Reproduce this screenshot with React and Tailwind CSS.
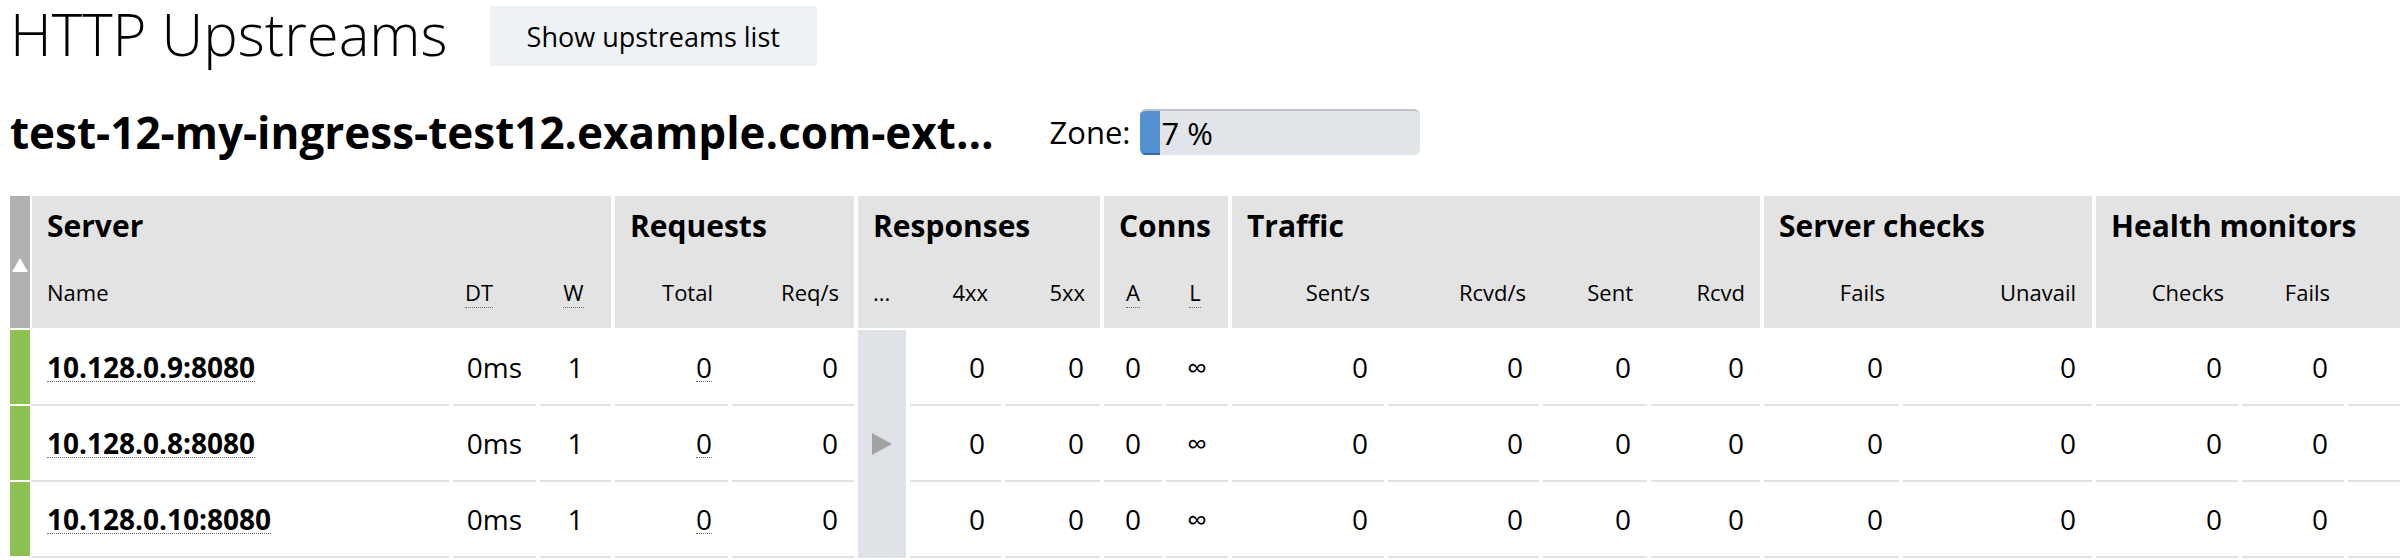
import React from 'react';

// column template shared by the header grid and the body grid
const GRID =
  'grid grid-cols-[20px_419px_87px_75px_117px_126px_52px_95px_99px_62px_66px_156px_155px_108px_113px_139px_193px_146px_106px_160px]';

const groups = [
  { title: 'Server', span: 'col-span-3', gap: 'ml-[2px]' },
  { title: 'Requests', span: 'col-span-2', gap: 'ml-[4px]' },
  { title: 'Responses', span: 'col-span-3', gap: 'ml-[4px]' },
  { title: 'Conns', span: 'col-span-2', gap: 'ml-[4px]' },
  { title: 'Traffic', span: 'col-span-4', gap: 'ml-[4px]' },
  { title: 'Server checks', span: 'col-span-2', gap: 'ml-[4px]' },
  { title: 'Health monitors', span: 'col-span-3', gap: 'ml-[4px]' },
];

const subCols = [
  { label: 'Name', gap: 'ml-[2px]', align: 'text-left pl-[15px]' },
  { label: 'DT', hint: true, align: 'text-left pl-[16px]' },
  { label: 'W', hint: true, align: 'text-center' },
  { label: 'Total', gap: 'ml-[4px]', align: 'text-right pr-[15px]' },
  { label: 'Req/s', align: 'text-right pr-[15px]' },
  { label: '...', gap: 'ml-[4px]', align: 'text-left pl-[15px]' },
  { label: '4xx', align: 'text-right pr-[13px]' },
  { label: '5xx', align: 'text-right pr-[15px]' },
  { label: 'A', hint: true, gap: 'ml-[4px]', align: 'text-center' },
  { label: 'L', hint: true, align: 'text-center' },
  { label: 'Sent/s', gap: 'ml-[4px]', align: 'text-right pr-[14px]' },
  { label: 'Rcvd/s', align: 'text-right pr-[13px]' },
  { label: 'Sent', align: 'text-right pr-[14px]' },
  { label: 'Rcvd', align: 'text-right pr-[15px]' },
  { label: 'Fails', gap: 'ml-[4px]', align: 'text-right pr-[14px]' },
  { label: 'Unavail', align: 'text-right pr-[16px]' },
  { label: 'Checks', gap: 'ml-[4px]', align: 'text-right pr-[14px]' },
  { label: 'Fails', align: 'text-right pr-[14px]' },
  { label: 'Last', align: 'text-right pr-[14px]' },
];

const servers = ['10.128.0.9:8080', '10.128.0.8:8080', '10.128.0.10:8080'];

const Hint = ({ children }) => (
  <span className="border-b border-dotted border-[#6f6f6f]">{children}</span>
);

const Cell = ({ children, center }) => (
  <div
    className={`ml-[4px] h-[76px] border-b-2 border-[#e3e3e3] flex items-center text-[28px] leading-[28px] ${
      center ? 'justify-center' : 'justify-end pr-[16px]'
    }`}
  >
    {children}
  </div>
);

const ServerRow = ({ name, first }) => (
  <>
    <div className="h-[76px] bg-[#8cc152] border-b-2 border-white" />
    <div className="ml-[2px] h-[76px] border-b-2 border-[#e3e3e3] flex items-center pl-[15px] text-[28px] leading-[28px] font-bold">
      <Hint>{name}</Hint>
    </div>
    <Cell center>0ms</Cell>
    <Cell center>1</Cell>
    <Cell>
      <Hint>0</Hint>
    </Cell>
    <Cell>0</Cell>
    {first && (
      <div className="ml-[4px] row-span-3 bg-[#dfe2e6] flex items-center justify-center">
        <svg width="20" height="22" viewBox="0 0 20 22">
          <polygon points="0,0 20,11 0,22" fill="#a3a3a3" />
        </svg>
      </div>
    )}
    <Cell>0</Cell>
    <Cell>0</Cell>
    <Cell center>0</Cell>
    <Cell center>∞</Cell>
    <Cell>0</Cell>
    <Cell>0</Cell>
    <Cell>0</Cell>
    <Cell>0</Cell>
    <Cell>0</Cell>
    <Cell>0</Cell>
    <Cell>0</Cell>
    <Cell>0</Cell>
    <Cell>0</Cell>
  </>
);

const App = () => {
  return (
    <div className="w-[2400px] h-[560px] overflow-hidden bg-white text-black font-['Open_Sans',sans-serif] px-[10px]">
      {/* page title */}
      <div className="flex items-start gap-[42px]">
        <h1 className="text-[58px] leading-[68px] font-light">HTTP Upstreams</h1>
        <button className="mt-[6px] h-[60px] px-[37px] bg-[#eff2f5] text-[27px] leading-[27px]">
          Show upstreams list
        </button>
      </div>

      {/* upstream name + zone usage */}
      <div className="mt-[32px] h-[64px] flex items-center">
        <h2 className="text-[44px] leading-[44px] font-bold">test-12-my-ingress-test12.example.com-ext…</h2>
        <div className="ml-[56px] flex items-center gap-[10px]">
          <span className="text-[31px] leading-[31px]">Zone:</span>
          <div className="relative w-[280px] h-[46px] rounded-[6px] overflow-hidden bg-[#e1e4e8] border-t-2 border-[#c0c4c8] flex items-center">
            <div className="absolute left-0 top-0 bottom-0 w-[20px] bg-[#5591d1] border-b-2 border-[#2d6aad]" />
            <span className="relative pl-[21px] text-[31px] leading-[31px]">7 %</span>
          </div>
        </div>
      </div>

      {/* upstream servers table */}
      <div className="mt-[32px]">
        <div className={GRID}>
          <div className="row-span-2 bg-[#b0b1b3] flex items-center justify-center pt-[6px]">
            <svg width="16" height="14" viewBox="0 0 16 14">
              <polygon points="8,0 16,14 0,14" fill="#ffffff" />
            </svg>
          </div>
          {groups.map((g) => (
            <div
              key={g.title}
              className={`${g.span} ${g.gap} h-[68px] pt-[15px] pl-[15px] bg-[#e3e3e3] text-[30px] leading-[30px] font-bold whitespace-nowrap`}
            >
              {g.title}
            </div>
          ))}
          {subCols.map((c, i) => (
            <div
              key={i}
              className={`${c.gap || ''} ${c.align} h-[64px] pt-[17px] bg-[#e3e3e3] text-[22px] leading-[22px] whitespace-nowrap`}
            >
              {c.hint ? <Hint>{c.label}</Hint> : c.label}
            </div>
          ))}
        </div>

        <div className={`${GRID} mt-[2px]`}>
          {servers.map((s, i) => (
            <ServerRow key={s} name={s} first={i === 0} />
          ))}
        </div>
      </div>
    </div>
  );
};

export default App;
